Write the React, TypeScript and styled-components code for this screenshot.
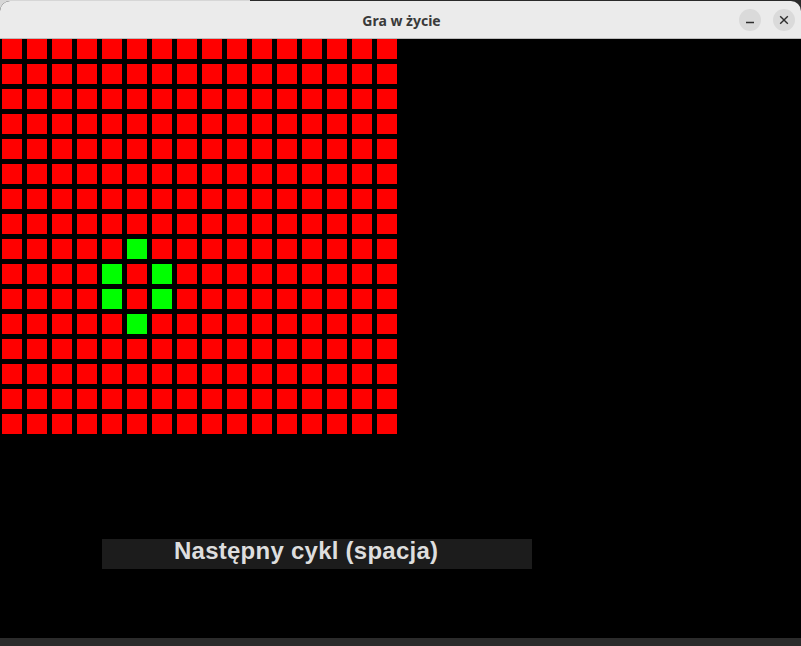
import React, { FC } from 'react';
import styled, { createGlobalStyle } from 'styled-components';

const SIZE = 16;
const ALIVE = new Set(['8-5', '9-4', '9-6', '10-4', '10-6', '11-5']);

const App: FC = () => {
  const cells = [];
  for (let r = 0; r < SIZE; r++) {
    for (let c = 0; c < SIZE; c++) {
      cells.push(<CellStyled key={`${r}-${c}`} $alive={ALIVE.has(`${r}-${c}`)} />);
    }
  }

  return (
    <>
      <GlobalStyle />
      <DesktopStyled>
        <WindowStyled>
          <TitleBarStyled>
            <TitleStyled>Gra w życie</TitleStyled>
            <ControlsStyled>
              <ControlButtonStyled>
                <svg width="10" height="10" viewBox="0 0 10 10">
                  <line x1="1" y1="7.5" x2="9" y2="7.5" stroke="#2e2e2e" strokeWidth="1.4" />
                </svg>
              </ControlButtonStyled>
              <ControlButtonStyled>
                <svg width="10" height="10" viewBox="0 0 10 10">
                  <line x1="1.2" y1="1.2" x2="8.8" y2="8.8" stroke="#2e2e2e" strokeWidth="1.4" />
                  <line x1="8.8" y1="1.2" x2="1.2" y2="8.8" stroke="#2e2e2e" strokeWidth="1.4" />
                </svg>
              </ControlButtonStyled>
            </ControlsStyled>
          </TitleBarStyled>
          <CanvasStyled>
            <GridStyled>{cells}</GridStyled>
            <NextButtonStyled>Następny cykl (spacja)</NextButtonStyled>
          </CanvasStyled>
        </WindowStyled>
        <DockStripStyled />
      </DesktopStyled>
    </>
  );
};

export default App;

const GlobalStyle = createGlobalStyle`
  html, body {
    margin: 0;
    padding: 0;
    background: #1b1b1b;
    overflow: hidden;
  }
`;

const DesktopStyled = styled.div`
  width: 801px;
  height: 646px;
  display: flex;
  flex-direction: column;
  background: linear-gradient(to right, #d6d6d6 0px, #d6d6d6 250px, #2a2a2a 250px);
  padding-top: 1px;
  box-sizing: border-box;
`;

const WindowStyled = styled.div`
  width: 801px;
  height: 637px;
  display: flex;
  flex-direction: column;
  border-radius: 10px 10px 0 0;
  overflow: hidden;
  background: #000;
`;

const TitleBarStyled = styled.div`
  height: 37px;
  flex-shrink: 0;
  position: relative;
  display: flex;
  align-items: center;
  justify-content: center;
  background: #ebebeb;
  border-bottom: 1px solid #bcbcbc;
`;

const TitleStyled = styled.div`
  font-family: 'Noto Sans', 'Open Sans', sans-serif;
  font-weight: 700;
  font-size: 14px;
  color: #3a3a3a;
  margin-left: 2px;
  margin-top: 1px;
`;

const ControlsStyled = styled.div`
  position: absolute;
  right: 6px;
  top: 8px;
  display: flex;
  gap: 12px;
`;

const ControlButtonStyled = styled.div`
  width: 22px;
  height: 22px;
  border-radius: 50%;
  background: #dadada;
  display: flex;
  align-items: center;
  justify-content: center;
`;

const CanvasStyled = styled.div`
  flex: 1;
  display: flex;
  flex-direction: column;
  align-items: flex-start;
  background: #000;
`;

const GridStyled = styled.div`
  display: grid;
  grid-template-columns: repeat(${SIZE}, 20px);
  grid-auto-rows: 20px;
  gap: 5px;
  margin-left: 2px;
`;

const CellStyled = styled.div<{ $alive: boolean }>`
  background: ${(p) => (p.$alive ? '#00ff00' : '#ff0000')};
`;

const NextButtonStyled = styled.div`
  margin: 105px 0 0 102px;
  width: 430px;
  height: 30px;
  box-sizing: border-box;
  padding-left: 72px;
  background: #1c1c1c;
  color: #dedede;
  font-family: 'Liberation Sans', Arial, sans-serif;
  font-weight: 700;
  font-size: 24px;
  line-height: 24px;
  letter-spacing: 0.25px;
  white-space: nowrap;
`;

const DockStripStyled = styled.div`
  flex: 1;
  background: #2b2b2b;
`;
